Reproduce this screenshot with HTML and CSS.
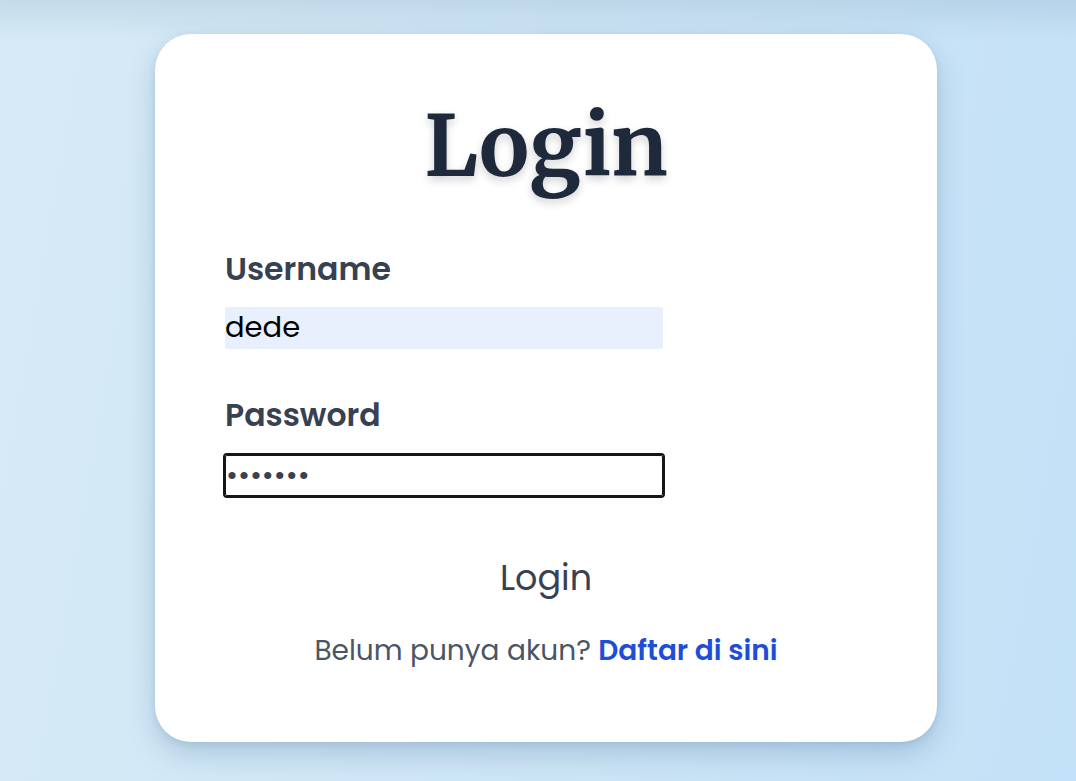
FILE: index.html
```html
<!DOCTYPE html>
<html lang="id">
<head>
<meta charset="utf-8">
<title>Login</title>
<link rel="stylesheet" href="styles.css">
</head>
<body>
<main class="page">
  <section class="card">
    <h1 class="title">Login</h1>
    <form class="form">
      <label class="label" for="username">Username</label>
      <input class="field field-filled" id="username" type="text" value="dede">
      <label class="label label-gap" for="password">Password</label>
      <input class="field field-focus" id="password" type="password" value="dede123">
      <button class="submit" type="button">Login</button>
    </form>
    <p class="note">Belum punya akun? <a class="link" href="#">Daftar di sini</a></p>
  </section>
</main>
</body>
</html>
```
FILE: styles.css
```css
html, body {
  margin: 0;
  padding: 0;
}
body {
  min-height: 100vh;
  background:
    linear-gradient(to bottom, rgba(60, 100, 130, 0.12), rgba(60, 100, 130, 0) 40px),
    linear-gradient(100deg, #d7ebf7 0%, #cfe6f6 50%, #c3e1f8 100%);
  font-family: "Poppins", "DejaVu Sans", sans-serif;
}
.page {
  display: flex;
  justify-content: center;
  padding: 34px 0 40px 16px;
}
.card {
  width: 782px;
  box-sizing: border-box;
  background: #ffffff;
  border-radius: 36px;
  padding: 62px 70px 70px;
  box-shadow: 0 12px 28px rgba(70, 110, 150, 0.28), 0 2px 6px rgba(70, 110, 150, 0.12);
}
.title {
  margin: 0;
  text-align: center;
  font-family: "Merriweather", "Liberation Serif", serif;
  font-weight: 700;
  font-size: 84px;
  line-height: 1.2;
  color: #1e293b;
  text-shadow: 0 4px 8px rgba(0, 0, 0, 0.18);
}
.form {
  display: flex;
  flex-direction: column;
  align-items: flex-start;
  margin-top: 50px;
}
.label {
  font-weight: 600;
  font-size: 31.5px;
  line-height: 1.4;
  color: #374151;
  margin-bottom: 16px;
}
.label-gap {
  margin-top: 44px;
}
.field {
  width: 438px;
  height: 42px;
  box-sizing: border-box;
  margin: 0;
  padding: 0;
  border: none;
  border-radius: 2px;
  font-family: "Poppins", "DejaVu Sans", sans-serif;
  font-size: 29px;
  color: #000000;
  background: #ffffff;
}
.field-filled {
  background: #e8f0fe;
}
.field-focus {
  height: 41px;
  margin-top: 2px;
  border: 1px solid #161616;
  outline: 2px solid #161616;
  outline-offset: 0;
  color: #374151;
}
.submit {
  align-self: center;
  margin-top: 57px;
  padding: 0;
  border: none;
  background: transparent;
  font-family: "Poppins", "DejaVu Sans", sans-serif;
  font-size: 35px;
  line-height: 1.4;
  color: #374151;
  cursor: pointer;
}
.note {
  margin: 28px 0 0;
  text-align: center;
  font-size: 28px;
  line-height: 1.5;
  color: #4b5563;
}
.link {
  font-weight: 600;
  color: #1d4ed8;
  text-decoration: none;
}
```
